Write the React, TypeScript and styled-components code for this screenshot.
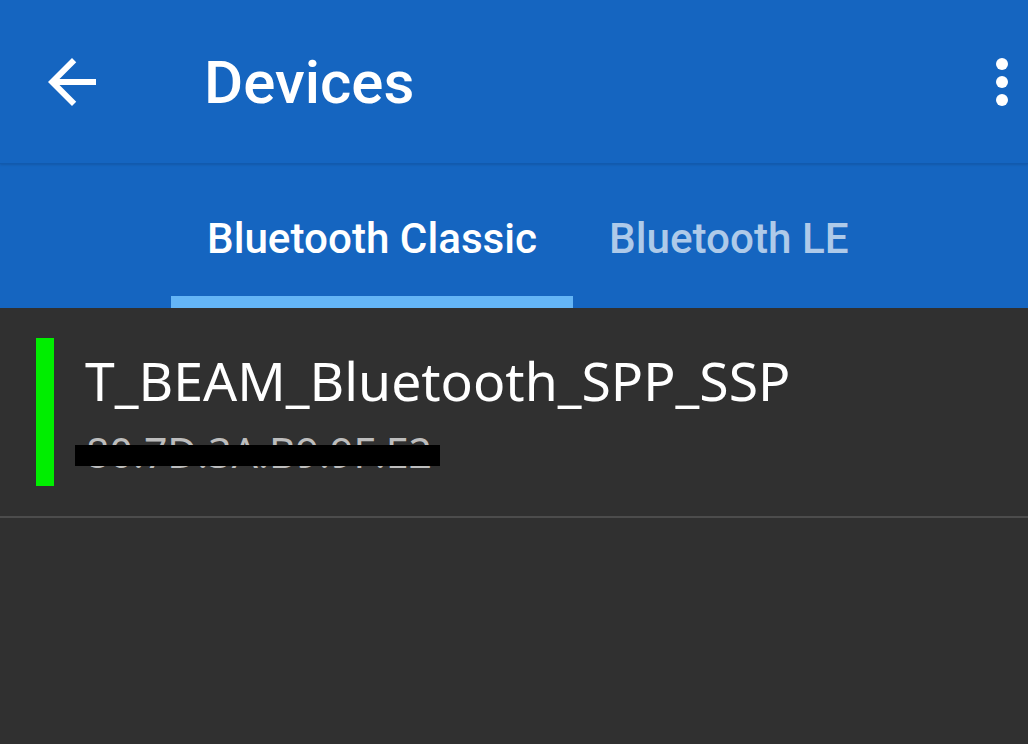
import React from "react";
import styled, { createGlobalStyle } from "styled-components";

const Global = createGlobalStyle`
  html, body { margin: 0; padding: 0; }
  body {
    background: #303030;
    font-family: Roboto, "Noto Sans", "Liberation Sans", sans-serif;
    width: 1028px;
    height: 744px;
    overflow: hidden;
  }
`;

const Page = styled.div`
  width: 1028px;
  height: 744px;
  background: #303030;
  display: flex;
  flex-direction: column;
`;

const Header = styled.div`
  background: #1565c0;
  display: flex;
  flex-direction: column;
`;

const Toolbar = styled.div`
  height: 163px;
  display: flex;
  align-items: center;
  border-bottom: 1px solid #115aae;
  box-shadow: 0 1px 2px rgba(0, 0, 0, 0.12);
`;

const IconButton = styled.div<{ $width: number; $right?: number }>`
  width: ${(p) => p.$width}px;
  height: 72px;
  margin-right: ${(p) => p.$right ?? 0}px;
  display: flex;
  align-items: center;
  justify-content: center;
  flex-shrink: 0;
`;

const Title = styled.div`
  flex: 1;
  margin-left: 60px;
  color: #ffffff;
  font-size: 60px;
  font-weight: 500;
  line-height: 1;
  padding-top: 2px;
`;

const TabRow = styled.div`
  height: 144px;
  display: flex;
  align-items: stretch;
  padding-left: 171px;
`;

const Tab = styled.div<{ $active?: boolean }>`
  position: relative;
  padding: 4px 36px 0;
  display: flex;
  align-items: center;
  font-size: 42.2px;
  font-weight: 500;
  color: ${(p) => (p.$active ? "#ffffff" : "rgba(255,255,255,0.66)")};
  &::after {
    content: "";
    position: absolute;
    left: 0;
    right: 0;
    bottom: 0;
    height: 12px;
    background: ${(p) => (p.$active ? "#64b5f6" : "transparent")};
  }
`;

const DeviceItem = styled.div`
  display: flex;
  padding: 30px 0 30px 36px;
  border-bottom: 2px solid #4c4c4c;
  font-family: "Noto Sans", "Open Sans", sans-serif;
`;

const StatusBar = styled.div<{ $color: string }>`
  width: 18px;
  height: 148px;
  background: ${(p) => p.$color};
  flex-shrink: 0;
`;

const DeviceText = styled.div`
  margin-left: 31px;
  display: flex;
  flex-direction: column;
  position: relative;
`;

const DeviceName = styled.div`
  color: #ffffff;
  font-size: 53.5px;
  font-weight: 400;
  line-height: 64px;
  margin-top: 11px;
`;

const DeviceAddress = styled.div`
  color: #bdbdbd;
  font-size: 41px;
  line-height: 48px;
  margin-top: 15px;
  margin-left: 1px;
`;

const Redaction = styled.div`
  position: absolute;
  left: -10px;
  top: 107px;
  width: 365px;
  height: 21px;
  background: #000000;
`;

export default function App() {
  return (
    <Page>
      <Global />
      <Header>
        <Toolbar>
          <IconButton $width={144}>
            <svg width="72" height="72" viewBox="0 0 24 24">
              <path
                fill="#ffffff"
                d="M20 11H7.83l5.59-5.59L12 4l-8 8 8 8 1.41-1.41L7.83 13H20v-2z"
              />
            </svg>
          </IconButton>
          <Title>Devices</Title>
          <IconButton $width={36} $right={8}>
            <svg width="36" height="72" viewBox="6 0 12 24">
              <circle cx="12" cy="6" r="2" fill="#ffffff" />
              <circle cx="12" cy="12" r="2" fill="#ffffff" />
              <circle cx="12" cy="18" r="2" fill="#ffffff" />
            </svg>
          </IconButton>
        </Toolbar>
        <TabRow>
          <Tab $active>Bluetooth Classic</Tab>
          <Tab>Bluetooth LE</Tab>
        </TabRow>
      </Header>
      <DeviceItem>
        <StatusBar $color="#00ee00" />
        <DeviceText>
          <DeviceName>T_BEAM_Bluetooth_SPP_SSP</DeviceName>
          <DeviceAddress>80:7D:3A:B9:9F:E2</DeviceAddress>
          <Redaction />
        </DeviceText>
      </DeviceItem>
    </Page>
  );
}
